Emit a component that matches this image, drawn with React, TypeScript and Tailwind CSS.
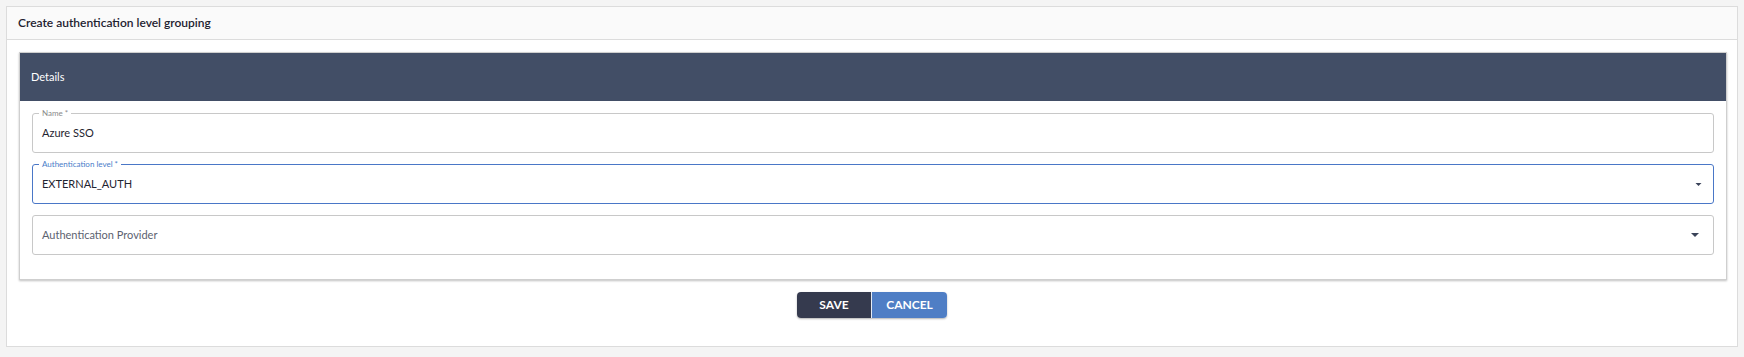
import React from 'react'

const font = { fontFamily: 'Lato, "Open Sans", "Liberation Sans", sans-serif' }

function Caret({ className }: { className?: string }) {
  return (
    <svg viewBox="0 0 8 4" className={className} aria-hidden>
      <path d="M0 0 H8 L4 4 Z" fill="#3a4359" />
    </svg>
  )
}

interface FieldProps {
  label?: string
  value?: string
  placeholder?: string
  focused?: boolean
  select?: boolean
  caretClass?: string
}

function Field({ label, value, placeholder, focused, select, caretClass }: FieldProps) {
  return (
    <div
      className={`relative h-[40px] rounded-[3px] border flex items-center pl-[9px] pr-[10px] ${
        focused ? 'border-[#4a77c7]' : 'border-[#c8c8c8]'
      }`}
    >
      {label && (
        <span
          className={`absolute left-[6px] -top-[6px] bg-white px-[3px] text-[8px] leading-[10px] ${
            focused ? 'text-[#4a7cc9]' : 'text-[#8a8a8a]'
          }`}
        >
          {label}
        </span>
      )}
      {value ? (
        <span className="flex-1 text-[11px] text-[#1f2430]">{value}</span>
      ) : (
        <span className="flex-1 text-[11px] text-[#5c6270]">{placeholder}</span>
      )}
      {select && <Caret className={caretClass} />}
    </div>
  )
}

export default function App() {
  return (
    <div style={font} className="min-h-screen bg-[#f4f4f4] pt-[6px] pb-[10px] px-[6px]">
      <div className="h-[341px] bg-white border border-[#dcdcdc] flex flex-col">
        {/* Card header */}
        <div className="h-[33px] bg-[#fafafa] border-b border-[#dcdcdc] flex items-center px-[11px]">
          <h1 className="text-[12px] font-semibold text-[#1e2230]">Create authentication level grouping</h1>
        </div>

        <div className="pt-[12px] pl-[12px] pr-[10px]">
          <div className="border border-[#cfcfcf] shadow-[0_1px_2px_rgba(0,0,0,0.25)]">
            <div className="h-[48px] bg-[#424e66] flex items-center px-[11px]">
              <span className="text-[11px] text-white">Details</span>
            </div>
            <div className="px-[12px] pt-[12px] pb-[24px] flex flex-col gap-[11px]">
              <Field label="Name *" value="Azure SSO" />
              <Field label="Authentication level *" value="EXTERNAL_AUTH" focused select caretClass="w-[7px] h-[3px] mr-[1px]" />
              <Field placeholder="Authentication Provider" select caretClass="w-[8px] h-[4px] mr-[4px]" />
            </div>
          </div>
        </div>

        <div className="flex justify-center mt-[12px]">
          <div className="flex rounded-[4px] overflow-hidden shadow-[0_1px_2px_rgba(0,0,0,0.3)]">
            <button className="w-[74px] h-[26px] bg-[#353a4e] text-white text-[12px] font-bold">SAVE</button>
            <button className="w-[76px] h-[26px] bg-[#4f7ec5] text-white text-[12px] font-bold border-l border-[#e6ecf5]">
              CANCEL
            </button>
          </div>
        </div>
      </div>
    </div>
  )
}
